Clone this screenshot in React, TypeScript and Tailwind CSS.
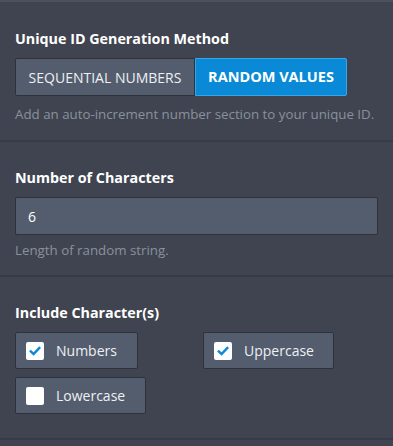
import React, { useState } from 'react';

const Check = () => (
  <svg viewBox="0 0 12 12" className="w-[12px] h-[12px]">
    <path d="M1.8 6.4 L4.6 9.1 L10.3 3" fill="none" stroke="#0a8ad8" strokeWidth="2.4" strokeLinecap="square" />
  </svg>
);

interface OptionProps {
  label: string;
  checked: boolean;
  onToggle: () => void;
  width: string;
}

const Option: React.FC<OptionProps> = ({ label, checked, onToggle, width }) => (
  <button
    onClick={onToggle}
    className={`${width} h-[37px] flex items-center pl-[10px] bg-[#535d6e] border border-[#2d323b] rounded-[2px]`}
  >
    <span className="w-[18px] h-[18px] bg-white rounded-[2px] flex items-center justify-center">
      {checked && <Check />}
    </span>
    <span className="ml-[12px] text-[14px] text-[#eef0f3]">{label}</span>
  </button>
);

const App: React.FC = () => {
  const [method, setMethod] = useState<'seq' | 'rand'>('rand');
  const [numbers, setNumbers] = useState(true);
  const [upper, setUpper] = useState(true);
  const [lower, setLower] = useState(false);

  return (
    <div className="w-[393px] h-[446px] bg-[#3f4450] border-t-2 border-[#4b515d] overflow-hidden" style={{ fontFamily: '"Open Sans", "Noto Sans", sans-serif' }}>
      {/* Method */}
      <div className="px-[15px] pt-[27px] pb-[17px] border-b-2 border-[#363b45]">
        <h3 className="text-[14.3px] font-bold text-white leading-[20px]">Unique ID Generation Method</h3>
        <div className="mt-[9px] flex">
          <button
            onClick={() => setMethod('seq')}
            className={`w-[180px] h-[38px] border rounded-l-[2px] ${
              method === 'seq' ? 'bg-[#0a8ad6] border-[#36a6ea] text-white font-bold text-[14.5px]' : 'bg-[#535d6e] border-[#2d323b] text-[#eef0f3] text-[14px]'
            }`}
          >
            SEQUENTIAL NUMBERS
          </button>
          <button
            onClick={() => setMethod('rand')}
            className={`w-[152px] h-[38px] border rounded-r-[2px] ${
              method === 'rand' ? 'bg-[#0a8ad6] border-[#36a6ea] text-white font-bold text-[14.5px]' : 'bg-[#535d6e] border-[#2d323b] text-[#eef0f3] text-[14px]'
            }`}
          >
            RANDOM VALUES
          </button>
        </div>
        <p className="mt-[9px] text-[13.3px] text-[#8a919c] leading-[18px]">Add an auto-increment number section to your unique ID.</p>
      </div>

      {/* Length */}
      <div className="px-[15px] pt-[26px] pb-[16px] border-b-2 border-[#363b45]">
        <h3 className="text-[14.3px] font-bold text-white leading-[20px]">Number of Characters</h3>
        <input
          defaultValue="6"
          className="mt-[9px] w-[363px] h-[38px] px-[12px] bg-[#535d6e] border border-[#2d323b] rounded-[2px] text-[14px] text-white outline-none"
        />
        <p className="mt-[6px] text-[13.3px] text-[#8a919c] leading-[18px]">Length of random string.</p>
      </div>

      {/* Characters */}
      <div className="px-[15px] pt-[26px] pb-[24px] border-b-2 border-[#363b45]">
        <h3 className="text-[14.3px] font-bold text-white leading-[20px]">Include Character(s)</h3>
        <div className="mt-[9px] flex flex-wrap gap-x-[65px] gap-y-[8px] w-[340px]">
          <Option label="Numbers" checked={numbers} onToggle={() => setNumbers(!numbers)} width="w-[123px]" />
          <Option label="Uppercase" checked={upper} onToggle={() => setUpper(!upper)} width="w-[131px]" />
          <Option label="Lowercase" checked={lower} onToggle={() => setLower(!lower)} width="w-[131px]" />
        </div>
      </div>
    </div>
  );
};

export default App;
